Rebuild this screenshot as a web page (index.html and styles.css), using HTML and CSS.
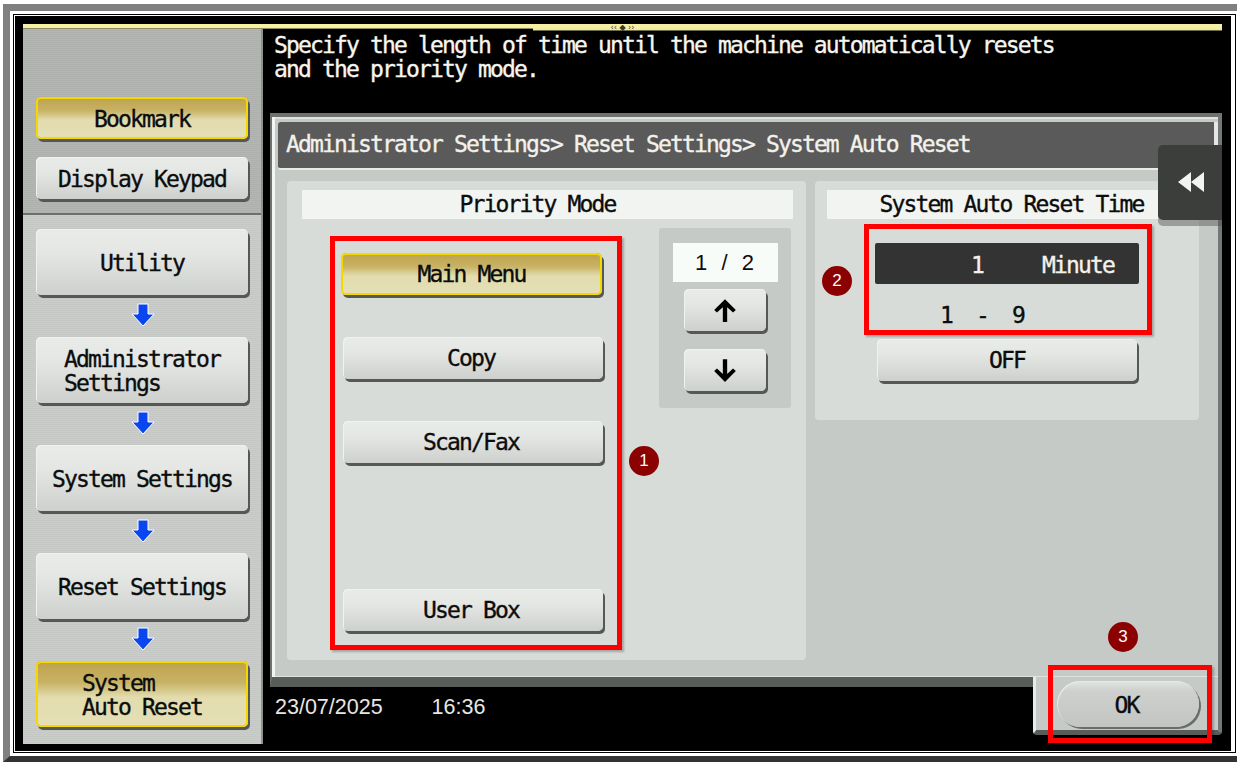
FILE: index.html
```html
<!DOCTYPE html>
<html lang="en">
<head>
<meta charset="utf-8">
<title>System Auto Reset</title>
<link rel="stylesheet" href="styles.css">
</head>
<body>
<div class="frame">
  <div class="rule-outer">
    <div class="rule-inner">
      <div class="screen">
        <div class="topbar"><span class="grip">‹‹ ◆ ››</span></div>
        <div class="workspace">
          <aside class="sidebar">
            <div class="side-top">
              <button class="btn side-btn short selected">Bookmark</button>
              <button class="btn side-btn short">Display Keypad</button>
            </div>
            <nav class="side-nav">
              <button class="btn side-btn tall">Utility</button>
              <svg class="flow" viewBox="0 0 24 24"><path d="M7 1h10v10h6L12 23 1 11h6z"/></svg>
              <button class="btn side-btn tall"><span class="two">Administrator<br>Settings</span></button>
              <svg class="flow" viewBox="0 0 24 24"><path d="M7 1h10v10h6L12 23 1 11h6z"/></svg>
              <button class="btn side-btn tall">System Settings</button>
              <svg class="flow" viewBox="0 0 24 24"><path d="M7 1h10v10h6L12 23 1 11h6z"/></svg>
              <button class="btn side-btn tall">Reset Settings</button>
              <svg class="flow" viewBox="0 0 24 24"><path d="M7 1h10v10h6L12 23 1 11h6z"/></svg>
              <button class="btn side-btn tall selected"><span class="two">System<br>Auto Reset</span></button>
            </nav>
          </aside>
          <main class="main">
            <p class="message">Specify the length of time until the machine automatically resets<br>and the priority mode.</p>
            <section class="panel">
              <div class="panel-body">
                <header class="crumb">Administrator Settings&gt; Reset Settings&gt; System Auto Reset</header>
                <div class="cards">
                  <section class="card card-left">
                    <h2 class="chip">Priority Mode</h2>
                    <div class="mode-row">
                      <div class="modes">
                        <button class="btn mode selected">Main Menu</button>
                        <button class="btn mode">Copy</button>
                        <button class="btn mode">Scan/Fax</button>
                        <div class="mode empty"></div>
                        <button class="btn mode">User Box</button>
                      </div>
                      <div class="pager">
                        <div class="page-no">1 / 2</div>
                        <button class="btn arrow" aria-label="Up"><svg viewBox="0 0 24 24"><path d="M12 2 22 12l-2.600 2.400-5.400-5V23h-4V9.400l-5.400 5L2 12z"/></svg></button>
                        <button class="btn arrow" aria-label="Down"><svg viewBox="0 0 24 24"><path d="M12 23 22 13l-2.600-2.400-5.400 5V2h-4v13.600l-5.400-5L2 13z"/></svg></button>
                      </div>
                    </div>
                  </section>
                  <section class="card card-right">
                    <h2 class="chip">System Auto Reset Time</h2>
                    <div class="value"><span>1</span><span>Minute</span></div>
                    <div class="range">1 - 9</div>
                    <button class="btn off">OFF</button>
                  </section>
                </div>
              </div>
              <footer class="panel-foot">
                <div class="clock"><span>23/07/2025</span><span>16:36</span></div>
                <div class="ok-tab"><button class="btn ok">OK</button></div>
              </footer>
            </section>
          </main>
        </div>
      </div>
    </div>
  </div>
</div>
<div class="side-tab"><svg viewBox="0 0 26 20"><path d="M13 0v20L0 10zM26 0v20L13 10z"/></svg></div>
<div class="mark mark-1"></div>
<div class="mark mark-2"></div>
<div class="mark mark-3"></div>
<div class="badge badge-1">1</div>
<div class="badge badge-2">2</div>
<div class="badge badge-3">3</div>
</body>
</html>
```
FILE: styles.css
```css
* { box-sizing: border-box; }
html, body { margin: 0; height: 100%; }
body {
  width: 1237px;
  height: 762px;
  background: #fff;
  overflow: hidden;
  position: relative;
  padding: 4px 0 0 3px;
  font-family: "DejaVu Sans Mono", "Liberation Mono", monospace;
}
.frame {
  width: 1234px;
  height: 758px;
  border-bottom: 6px solid #333;
  border-left: 7px solid #808080;
  border-top: 7px solid #808080;
}
.rule-outer {
  height: 100%;
  background: #fff;
  padding: 3px 0 3px 3px;
}
.rule-inner {
  height: 100%;
  width: 1223px;
  background: #fff;
  border: 1px solid #000;
  padding: 1px 4px 1px 1px;
}
.screen {
  height: 100%;
  background: #000;
  padding: 8px 9px 7px 8px;
  display: flex;
  flex-direction: column;
}
.topbar {
  height: 5px;
  background: #f4f0a4;
  border-bottom: 1px solid #8c8a60;
  position: relative;
  flex: none;
  display: flex;
  justify-content: center;
}
.topbar::after {
  content: "";
  position: absolute;
  left: 510px;
  right: 0;
  top: 100%;
  height: 2px;
  background: #f0eca0;
  box-shadow: 0 1px 0 #6e6c48;
}
.grip {
  font: 8px/5px "DejaVu Sans", sans-serif;
  color: #3a3a2a;
  position: relative;
  z-index: 1;
  margin-top: 1px;
  white-space: pre;
}
.workspace { flex: 1; display: flex; min-height: 0; }

.sidebar {
  width: 240px;
  flex: none;
  display: flex;
  flex-direction: column;
  background: repeating-linear-gradient(#cbcdca 0 1px, #c5c7c4 1px 2px);
  border-right: 2px solid #8f918e;
}
.side-top {
  height: 186px;
  flex: none;
  background: repeating-linear-gradient(#b4b6b3 0 1px, #aeb0ad 1px 2px);
  border-bottom: 2px solid #6d6f6c;
  padding: 68px 0 0 13px;
  display: flex;
  flex-direction: column;
  gap: 18px;
}
.side-nav {
  padding: 14px 0 0 13px;
  display: flex;
  flex-direction: column;
  align-items: flex-start;
}
.flow {
  width: 24px;
  height: 24px;
  margin: 8px 0 10px 95px;
  fill: #0a46f0;
  stroke: #fff;
  stroke-width: 1;
  display: block;
  flex: none;
}

.btn,
.message,
.crumb,
.chip,
.value,
.range {
  font-size: 23px;
  letter-spacing: -1.85px;
  -webkit-text-stroke: 0.35px currentColor;
}
.btn {
  font-family: inherit;
  line-height: 24px;
  font-weight: 400;
  color: #0c0c0c;
  padding: 2px 0 0;
  margin: 0;
  border: 0;
  border-radius: 5px;
  background: linear-gradient(#e8ebe8 0%, #e4e7e4 35%, #cdd0cd 100%);
  box-shadow: 2px 3px 0 #565856, inset 1px 1px 0 #f0f2f0;
  display: flex;
  align-items: center;
  justify-content: center;
}
.btn.selected {
  background: linear-gradient(#bda24e 0%, #c8b264 32%, #e2dcae 55%, #e4dfb6 100%);
  box-shadow: 2px 3px 0 #565856, inset 0 0 0 2px #f5d800;
}
.side-btn { width: 212px; }
.short { height: 42px; padding-top: 2px; }
.tall { height: 66px; }
.two { text-align: left; display: block; }

.main { flex: 1; min-width: 0; display: flex; flex-direction: column; padding-left: 7px; }
.message {
  margin: 0;
  height: 84px;
  padding: 4px 0 0 4px;
  color: #f6f6f0;
  line-height: 24px;
}
.panel { flex: 1; display: flex; flex-direction: column; min-height: 0; }
.panel-body {
  height: 574px;
  flex: none;
  background: #c6cac6;
  border-top: 4px solid #6f716f;
  border-left: 2px solid #6f716f;
  border-right: 4px solid #757775;
  border-bottom: 10px solid #5a5c5a;
  box-shadow: inset 3px 0 0 #f2f6f2, inset 0 2px 0 #dfe3df, inset 0 -1px 0 #dfe3df;
  padding: 5px 0 0 6px;
  display: flex;
  flex-direction: column;
}
.crumb {
  height: 48px;
  flex: none;
  background: #5a5a5a;
  border-bottom: 2px solid #e8ece8;
  border-right: 4px solid #e4e8e4;
  color: #f2f2ec;
  line-height: 44px;
  padding-left: 8px;
  border-radius: 3px 0 0 3px;
}
.cards {
  flex: 1;
  display: flex;
  padding: 11px 0 0 9px;
  gap: 9px;
  align-items: flex-start;
}
.card {
  background: #d8dcd8;
  border-radius: 4px;
  padding: 9px 0 0;
}
.card-left { width: 519px; height: 479px; padding-left: 15px; padding-right: 13px; }
.card-right { width: 384px; height: 239px; padding-left: 12px; padding-right: 29px; }
.chip {
  margin: 0;
  height: 29px;
  background: #f2f4f2;
  color: #0c0c0c;
  font-weight: 400;
  line-height: 28px;
  text-align: center;
}
.card-left .chip { padding-right: 20px; }
.card-right .chip { padding-left: 26px; }
.mode-row { display: flex; padding-top: 9px; align-items: flex-start; }
.modes {
  width: 357px;
  padding: 25px 0 0 41px;
  display: flex;
  flex-direction: column;
  gap: 42px;
}
.mode { width: 260px; height: 42px; flex: none; padding: 0 4px 0 0; }
.mode.selected { width: 261px; margin-left: -2px; padding-right: 0; }
.pager {
  width: 132px;
  height: 180px;
  background: #c6cac6;
  border-radius: 3px;
  padding: 15px 13px 0;
  display: flex;
  flex-direction: column;
  align-items: center;
}
.page-no {
  width: 105px;
  height: 39px;
  flex: none;
  background: #f8fcf8;
  color: #0c0c0c;
  font: 22px/40px "Liberation Sans", sans-serif;
  letter-spacing: 1px;
  text-align: center;
  word-spacing: 6px;
}
.arrow { width: 82px; height: 42px; flex: none; margin-top: 7px; padding: 0; }
.arrow + .arrow { margin-top: 18px; }
.arrow svg { width: 26px; height: 26px; fill: #000; display: block; }

.value {
  margin: 24px 0 0 48px;
  width: 264px;
  height: 41px;
  background: #333;
  color: #f2f2ec;
  line-height: 44px;
  display: flex;
  justify-content: flex-end;
  padding-right: 25px;
  gap: 59px;
  border-radius: 2px;
}
.range {
  margin: 19px 0 0 48px;
  width: 264px;
  height: 24px;
  color: #0c0c0c;
  line-height: 24px;
  padding-left: 65px;
  white-space: pre;
  word-spacing: 12px;
}
.off { width: 260px; height: 42px; margin: 12px 0 0 50px; padding-top: 0; }

.panel-foot { flex: 1; display: flex; min-height: 0; }
.clock {
  width: 763px;
  flex: none;
  color: #e6e6e6;
  font: 21.5px/24px "Liberation Sans", sans-serif;
  padding: 8px 0 0 5px;
  display: flex;
  gap: 49px;
}
.ok-tab {
  flex: 1;
  height: 58px;
  margin-top: -10px;
  background: #c6cac6;
  border-left: 3px solid #e8ece8;
  border-right: 4px solid #757775;
  border-bottom: 5px solid #5a5c5a;
  border-bottom-left-radius: 4px;
  border-bottom-right-radius: 4px;
  padding: 4px 0 0 21px;
}
.ok {
  width: 142px;
  height: 46px;
  border-radius: 23px;
  padding: 2px 3px 0 0;
  background: linear-gradient(#e2e5e2 0%, #cdd0cd 22%, #c2c5c2 100%);
  box-shadow: 2px 2px 0 #6a6c6a, inset 1px 1px 0 #e6e9e6;
}

.side-tab {
  position: absolute;
  left: 1158px;
  top: 145px;
  width: 64px;
  height: 75px;
  background: #3c3e3c;
  border-radius: 5px 0 0 5px;
  box-shadow: 0 6px 0 rgba(80,82,80,.45);
  display: flex;
  align-items: center;
  padding-left: 20px;
}
.side-tab svg { width: 26px; height: 20px; fill: #f2f4f2; margin-top: -1px; }

.mark {
  position: absolute;
  border: 5px solid #f00;
  box-shadow: 2px 2px 2px rgba(0,0,0,.25);
}
.mark-1 { left: 330px; top: 236px; width: 292px; height: 414px; }
.mark-2 { left: 864px; top: 224px; width: 288px; height: 111px; }
.mark-3 { left: 1048px; top: 665px; width: 164px; height: 78px; }
.badge {
  position: absolute;
  width: 30px;
  height: 30px;
  border-radius: 50%;
  background: #8b0000;
  color: #fff;
  font: 17px/30px "Liberation Sans", sans-serif;
  text-align: center;
}
.badge-1 { left: 629px; top: 446px; }
.badge-2 { left: 822px; top: 266px; }
.badge-3 { left: 1108px; top: 622px; }
```
